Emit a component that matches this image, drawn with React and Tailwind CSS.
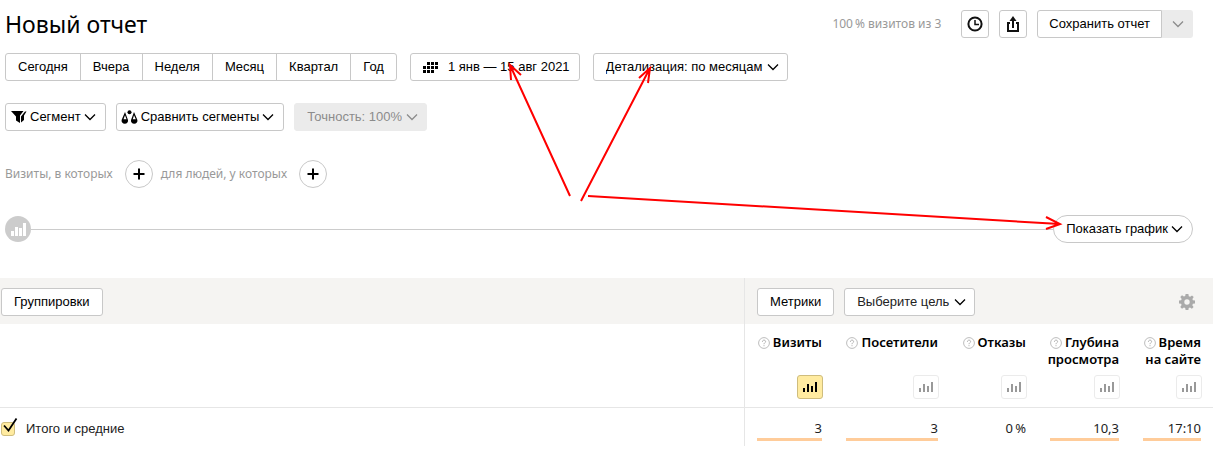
import React from "react";

const btn =
  "flex h-7 items-center whitespace-nowrap rounded-[3px] border border-[#c8c8c8] bg-white text-[13px] leading-4 text-black";

function Chevron({ className = "" }) {
  return (
    <svg viewBox="0 0 12 8" className={`pointer-events-none h-2 w-3 shrink-0 ${className}`} fill="none" stroke="currentColor" strokeWidth="1.3" aria-hidden="true">
      <path d="M1 1.5 L6 6.5 L11 1.5" />
    </svg>
  );
}

function Dropdown({ label, text, disabled, className }) {
  return (
    <div className="grid items-center">
      <select
        aria-label={label}
        disabled={disabled}
        className={`col-start-1 row-start-1 h-7 appearance-none rounded-[3px] border pl-3 text-[13px] leading-4 opacity-100 ${className}`}
      >
        <option>{text}</option>
      </select>
      <Chevron className={`col-start-1 row-start-1 mr-[9px] justify-self-end ${disabled ? "text-[#8c8c8c]" : "text-black"}`} />
    </div>
  );
}

function Bars() {
  return (
    <svg viewBox="0 0 14 10" className="h-[10px] w-[14px]" fill="currentColor" aria-hidden="true">
      <path d="M0 6h2v4H0zM4 2h2v8H4zM8 4h2v6H8zM12 0h2v10h-2z" />
    </svg>
  );
}

function Help() {
  return (
    <svg viewBox="0 0 12 12" className="mr-[3px] inline-block size-3 align-[-2px]" aria-hidden="true">
      <circle cx="6" cy="6" r="5.4" fill="none" stroke="#bdbdbd" />
      <path d="M4.4 4.8 C4.4 2.6 7.6 2.6 7.6 4.6 C7.6 5.8 6 5.8 6 7.2 M6 8.2 V9.2" fill="none" stroke="#a8a8a8" strokeWidth="0.9" />
    </svg>
  );
}

function Plus({ label }) {
  return (
    <button aria-label={label} className="flex size-7 items-center justify-center rounded-full border border-[#c8c8c8] bg-white">
      <svg viewBox="0 0 12 12" className="size-3" stroke="#000" strokeWidth="2" aria-hidden="true">
        <path d="M6 0.5V11.5M0.5 6H11.5" />
      </svg>
    </button>
  );
}

const periods = ["Сегодня", "Вчера", "Неделя", "Месяц", "Квартал", "Год"];

const metrics = [
  { lines: ["Визиты"], value: "3", bar: true, active: true, width: "w-[78px]" },
  { lines: ["Посетители"], value: "3", bar: true, width: "w-[116px]" },
  { lines: ["Отказы"], value: "0\u2009%", bar: false, width: "w-[88px]" },
  { lines: ["Глубина", "просмотра"], value: "10,3", bar: true, width: "w-[93px]" },
  { lines: ["Время", "на сайте"], value: "17:10", bar: true, width: "w-[82px]" },
];

export default function App() {
  return (
    <main className="relative bg-white font-['Liberation_Sans',Arial,sans-serif] text-black">
      <div className="flex flex-col pr-5 pl-[5px]">
        <header className="flex items-center justify-between pt-[10px]">
          <h1 className="font-['Noto_Sans',sans-serif] text-[23px] leading-7">Новый отчет</h1>
          <div className="flex items-center gap-[10px]">
            <span className="mr-[10px] font-['Noto_Sans',sans-serif] text-[12px] text-[#999]">{"100\u2009% визитов из 3"}</span>
            <button aria-label="История" className={`${btn} w-7 justify-center`}>
              <svg viewBox="0 0 16 16" className="size-4" fill="none" stroke="#111" strokeWidth="2" aria-hidden="true">
                <circle cx="8" cy="8" r="6.6" />
                <path d="M8 4V8.5H12" strokeWidth="1.5" />
              </svg>
            </button>
            <button aria-label="Экспорт" className={`${btn} w-7 justify-center`}>
              <svg viewBox="0 0 12 16" className="h-4 w-3" fill="none" stroke="#111" strokeWidth="2" aria-hidden="true">
                <path d="M3 7H1V15H11V7H9M6 12V4" />
                <path d="M6 0L9.500 5H2.500Z" fill="#111" stroke="none" />
              </svg>
            </button>
            <div className="flex">
              <button className={`${btn} rounded-r-none px-[11px]`}>Сохранить отчет</button>
              <button disabled aria-label="Другие варианты сохранения" className="flex h-7 w-[31px] items-center justify-center rounded-r-[3px] bg-[#ebebeb] text-[#8c8c8c]">
                <Chevron />
              </button>
            </div>
          </div>
        </header>

        <div className="mt-[15px] flex gap-[13px]">
          <div className="flex">
            {periods.map((p) => (
              <button key={p} className={`${btn} -ml-px rounded-none px-3 first:ml-0 first:rounded-l-[3px] last:rounded-r-[3px]`}>{p}</button>
            ))}
          </div>
          <button className={`${btn} pr-[9px] pl-3`}>
            <svg viewBox="0 0 15 11" className="mr-[10px] h-[11px] w-[15px]" aria-hidden="true">
              <path d="M4 0h3v3H4zM8 0h3v3H8zM12 0h3v3h-3zM0 4h3v3H0zM4 4h3v3H4zM8 4h3v3H8zM12 4h3v3h-3zM0 8h3v3H0zM4 8h3v3H4zM8 8h3v3H8z" />
            </svg>
            1 янв — 15 авг 2021
          </button>
          <Dropdown label="Детализация" text="Детализация: по месяцам" className="border-[#c8c8c8] bg-white pr-6 text-black" />
        </div>

        <div className="mt-[22px] flex gap-[10px]">
          <button aria-haspopup="menu" className={`${btn} pr-[9px] pl-[5px]`}>
            <svg viewBox="0 0 16 12" className="mr-[3px] h-3 w-4" aria-hidden="true">
              <path d="M0 0H12.500L9 4.500V12L5 9.500V5.500Z" />
              <path d="M15.500 0.500L13 4.500V9L10 11.500V5.500L14 0.500Z" />
            </svg>
            Сегмент
            <Chevron className="ml-[3px]" />
          </button>
          <button aria-haspopup="menu" className={`${btn} pr-[9px] pl-1`}>
            <svg viewBox="0 0 17 14" className="mr-[3px] h-[14px] w-[17px]" aria-hidden="true">
              <path d="M4 2L6.800 9.500A3.200 3.200 0 1 1 0.800 9.500ZM4 5.200L2.500 9.300H5.500Z" fillRule="evenodd" />
              <path d="M13 2L16.200 9.500A3.200 3.200 0 1 1 10.200 9.500ZM13 5.200L11.800 9.300H14.800Z" fillRule="evenodd" />
              <circle cx="8.500" cy="2.300" r="2" />
            </svg>
            Сравнить сегменты
            <Chevron className="ml-[3px]" />
          </button>
          <Dropdown label="Точность" text="Точность: 100%" disabled className="border-[#ebebeb] bg-[#ebebeb] pr-6 text-[#8c8c8c]" />
        </div>

        <div className="mt-[29px] flex items-center font-['Noto_Sans',sans-serif] text-[12px] leading-4 text-[#999]">
          <span className="mr-3">Визиты, в которых</span>
          <Plus label="Добавить условие для визитов" />
          <span className="mr-3 ml-2">для людей, у которых</span>
          <Plus label="Добавить условие для людей" />
        </div>

        <div className="mt-[27px] flex items-center">
          <span className="flex size-[26px] items-center justify-center rounded-full bg-[#ccc]">
            <svg viewBox="0 0 15 13" className="h-[13px] w-[15px]" fill="#fff" aria-hidden="true">
              <path d="M0 8h3v5H0zM4 4h3v9H4zM8 5h3v8H8zM12 0h3v13h-3z" />
            </svg>
          </span>
          <span className="h-px flex-1 bg-[#ccc]" />
          <button aria-haspopup="true" className={`${btn} rounded-full pr-[9px] pl-3`}>
            Показать график
            <Chevron className="ml-[3px]" />
          </button>
        </div>
      </div>

      <section className="mt-[35px]">
        <div className="flex bg-[#f5f4f2]">
          <div className="flex flex-1 items-center border-r border-[#e6e6e6] pt-[10px] pb-2 pl-px">
            <button className={`${btn} px-3 text-[#222]`}>Группировки</button>
          </div>
          <div className="flex w-[468px] items-center gap-[10px] pt-[10px] pr-[18px] pb-2 pl-3">
            <button className={`${btn} px-3 text-[#222]`}>Метрики</button>
            <Dropdown label="Цель" text="Выберите цель" className="border-[#c8c8c8] bg-white pr-6 text-[#222]" />
            <button aria-label="Настройки таблицы" className="ml-auto">
              <svg viewBox="0 0 16 16" className="size-4" fill="#aaa" aria-hidden="true">
                <path fillRule="evenodd" d="M6.600 0H9.400L9.800 2.200L11.200 2.800L13 1.400L14.700 3.100L13.400 5L13.900 6.300L16 6.600V9.400L13.900 9.800L13.300 11.200L14.600 13L12.900 14.700L11 13.400L9.700 13.900L9.400 16H6.600L6.200 13.900L4.900 13.400L3 14.700L1.300 13L2.600 11.100L2.100 9.800L0 9.400V6.600L2.100 6.200L2.700 4.900L1.300 3L3 1.300L4.900 2.600L6.200 2.100ZM8 5.300A2.700 2.700 0 1 0 8 10.700A2.700 2.700 0 1 0 8 5.300Z" />
              </svg>
            </button>
          </div>
        </div>
        <table className="w-full table-fixed border-collapse font-['Noto_Sans',sans-serif] text-[13px]">
          <thead>
            <tr className="border-b border-[#e6e6e6] align-top">
              <td className="border-r border-[#e6e6e6]" />
              {metrics.map((m, i) => (
                <th key={i} scope="col" className={`${m.width} p-0 text-right font-semibold`}>
                  <div className="flex flex-col items-end pt-[10px] pb-2">
                    <div className="h-[41px] leading-[17px] whitespace-nowrap">
                      <div><Help />{m.lines[0]}</div>
                      {m.lines[1] && <div>{m.lines[1]}</div>}
                    </div>
                    <button
                      aria-label={`График: ${m.lines.join(" ")}`}
                      className={`-mr-px flex h-6 w-[26px] items-center justify-center rounded-[3px] border ${m.active ? "border-[#cfbd7d] bg-[#ffeba0] text-black" : "border-[#ebebeb] bg-white text-[#999]"}`}
                    >
                      <Bars />
                    </button>
                  </div>
                </th>
              ))}
              <td className="w-3" />
            </tr>
          </thead>
          <tbody>
            <tr className="h-[38px]">
              <th scope="row" className="border-r border-[#e6e6e6] p-0 text-left font-['Liberation_Sans',Arial,sans-serif] font-normal text-[#222]">
                <label className="flex items-center pt-1 pl-px">
                  <span className="relative mr-[11px] size-[14px]">
                    <input type="checkbox" defaultChecked className="block size-[14px] appearance-none rounded-[3px] border border-[#cfbd7d] bg-[#ffeba0]" />
                    <svg viewBox="0 0 15 14" className="pointer-events-none absolute bottom-1 left-[2px] h-[14px] w-[15px]" fill="none" stroke="#000" strokeWidth="1.8" aria-hidden="true">
                      <path d="M1 7.500L5.500 12.500L13.500 0.500" />
                    </svg>
                  </span>
                  Итого и средние
                </label>
              </th>
              {metrics.map((m, i) => (
                <td key={i} className="p-0 text-right align-top text-[#222]">
                  <div className={`border-b-[3px] pt-[10px] leading-5 ${i === 0 ? "ml-3" : "ml-6"} ${m.bar ? "border-[#ffcc9a]" : "border-transparent"}`}>{m.value}</div>
                </td>
              ))}
              <td />
            </tr>
          </tbody>
        </table>
      </section>

      <svg viewBox="0 0 1213 460" className="pointer-events-none absolute top-0 left-0 h-[460px] w-[1213px]" fill="none" stroke="#f00" strokeWidth="2" aria-hidden="true">
        <path d="M570 196L510 65M511 80L510 65L521 75" />
        <path d="M581 201L650 68M639 78L650 68L648 83" />
        <path d="M588 196L1060 224M1046 217L1060 224L1046 229" />
      </svg>
    </main>
  );
}
